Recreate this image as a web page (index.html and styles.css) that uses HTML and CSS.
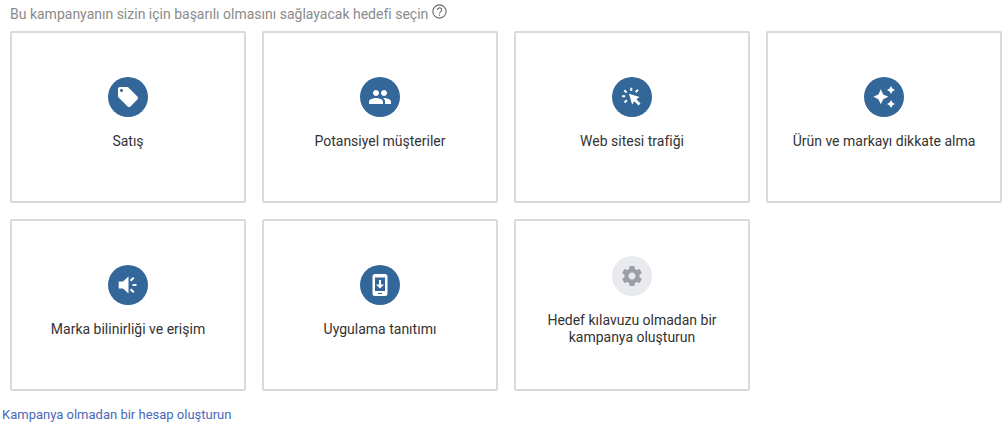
FILE: index.html
```html
<!DOCTYPE html>
<html lang="tr">
<head>
<meta charset="utf-8">
<meta name="viewport" content="width=device-width, initial-scale=1">
<title>Kampanya hedefi</title>
<link rel="stylesheet" href="styles.css">
</head>
<body>
<main class="page">
  <header class="heading">
    <h1 class="title">Bu kampanyanın sizin için başarılı olmasını sağlayacak hedefi seçin</h1>
    <button class="help" type="button" aria-label="Yardım">
      <svg viewBox="0 0 14 14" fill="none" stroke="currentColor">
        <circle cx="7" cy="7" r="6.2"/>
        <path d="M5 5.600a2 2 0 1 1 3.200 1.600C7.400 7.800 7 8 7 8.900M7 9.800v1.100"/>
      </svg>
    </button>
  </header>

  <div class="goals">
    <button class="goal" type="button">
      <span class="badge"><svg viewBox="0 0 24 24"><path d="M21.410 11.580l-9-9C12.050 2.220 11.550 2 11 2H4c-1.100 0-2 .9-2 2v7c0 .55.220 1.050.590 1.420l9 9c.36.36.86.58 1.410.58s1.050-.22 1.410-.59l7-7c.37-.36.59-.86.59-1.410s-.23-1.060-.59-1.420zM5.500 7C4.670 7 4 6.330 4 5.500S4.670 4 5.500 4 7 4.670 7 5.500 6.330 7 5.500 7z"/></svg></span>
      <span class="label">Satış</span>
    </button>
    <button class="goal" type="button">
      <span class="badge"><svg viewBox="0 0 24 24"><path d="M16 11c1.660 0 2.990-1.340 2.990-3S17.660 5 16 5s-3 1.340-3 3 1.340 3 3 3zm-8 0c1.660 0 2.990-1.340 2.990-3S9.660 5 8 5 5 6.340 5 8s1.340 3 3 3zm0 2c-2.330 0-7 1.170-7 3.500V19h14v-2.500C15 14.170 10.330 13 8 13zm8 0c-.29 0-.62.02-.97.05 1.160.84 1.970 1.970 1.970 3.450V19h6v-2.500c0-2.330-4.670-3.500-7-3.500z"/></svg></span>
      <span class="label">Potansiyel müşteriler</span>
    </button>
    <button class="goal" type="button">
      <span class="badge"><svg viewBox="0 0 24 24"><path d="M9 8.700l10.500 3.300-3.200 2.200 4.200 4.200-2 2-4.200-4.200-2.200 3.300z"/><path class="ray" d="M11.300 2.700v3.300M4.300 5.200l2.300 2.300M2 11.200h3.200M4.500 17.500l2.400-2.400M18 4.700l-2.400 2.400"/></svg></span>
      <span class="label">Web sitesi trafiği</span>
    </button>
    <button class="goal" type="button">
      <span class="badge"><svg viewBox="0 0 24 24"><path d="M8.800 4.300L11.200 9.400 16.300 11.800l-5.100 2.400-2.400 5.100-2.400-5.100L1.300 11.800l5.100-2.400zM19 1l1.400 2.600L23 5l-2.600 1.400L19 9l-1.400-2.600L15 5l2.600-1.400zM19 15l1.400 2.600L23 19l-2.600 1.400L19 23l-1.400-2.600L15 19l2.600-1.400z"/></svg></span>
      <span class="label">Ürün ve markayı dikkate alma</span>
    </button>
    <button class="goal" type="button">
      <span class="badge"><svg viewBox="0 0 24 24"><path d="M2.700 8.500v7H7l5.500 5V3.500L7 8.500z"/><path class="ray" d="M16.500 12h4M14.600 7.800l3.200-3.200M14.600 16.200l3.200 3.200"/></svg></span>
      <span class="label">Marka bilinirliği ve erişim</span>
    </button>
    <button class="goal" type="button">
      <span class="badge"><svg viewBox="0 0 24 24"><path fill-rule="evenodd" d="M7 1h10a2.500 2.500 0 0 1 2.500 2.500v17a2.500 2.500 0 0 1-2.500 2.500H7a2.500 2.500 0 0 1-2.500-2.500v-17A2.500 2.500 0 0 1 7 1zM7 4.500v13.500h10V4.500zM10 20v1h4v-1zM11 7h2v4.500h3l-4 4-4-4h3z"/></svg></span>
      <span class="label">Uygulama tanıtımı</span>
    </button>
    <button class="goal" type="button">
      <span class="badge badge-muted"><svg viewBox="0 0 24 24"><path d="M19.430 12.980c.04-.32.070-.64.070-.98s-.03-.66-.07-.98l2.110-1.650c.19-.15.24-.42.120-.64l-2-3.460c-.12-.22-.39-.3-.61-.22l-2.490 1c-.52-.4-1.080-.73-1.690-.98l-.38-2.650C14.460 2.180 14.250 2 14 2h-4c-.25 0-.46.18-.49.42l-.38 2.650c-.61.25-1.170.59-1.690.98l-2.490-1c-.23-.09-.49 0-.61.22l-2 3.460c-.13.22-.07.49.120.64l2.110 1.650c-.04.32-.07.65-.07.98s.03.66.070.98l-2.110 1.650c-.19.15-.24.42-.12.64l2 3.460c.12.22.39.3.610.22l2.490-1c.52.4 1.080.73 1.690.98l.38 2.650c.03.24.24.42.490.42h4c.25 0 .46-.18.490-.42l.38-2.650c.61-.25 1.170-.59 1.690-.98l2.490 1c.23.090.49 0 .61-.22l2-3.460c.12-.22.070-.49-.12-.64l-2.110-1.650zM12 15.500c-1.930 0-3.500-1.570-3.500-3.500s1.570-3.500 3.500-3.500 3.500 1.570 3.500 3.500-1.570 3.500-3.500 3.500z"/></svg></span>
      <span class="label">Hedef kılavuzu olmadan bir kampanya oluşturun</span>
    </button>
  </div>

  <a class="link" href="#">Kampanya olmadan bir hesap oluşturun</a>
</main>
</body>
</html>
```
FILE: styles.css
```css
* {
  box-sizing: border-box;
}

body {
  margin: 0;
  background: #fff;
  color: #3c4043;
  font-family: Roboto, "Noto Sans", sans-serif;
  font-size: 14px;
  line-height: 17px;
}

.page {
  padding-top: 4px;
}

.heading {
  display: flex;
  align-items: flex-start;
  gap: 4px;
  padding: 0 10px;
  margin-bottom: 6px;
}

.title {
  margin: 0;
  color: #8a8a8a;
  font-size: 14px;
  font-weight: 400;
  line-height: 21px;
}

.help {
  padding: 0;
  border: 0;
  background: none;
  color: #666;
  line-height: 0;
}

.help svg {
  width: 15px;
  height: 15px;
}

.goals {
  display: grid;
  grid-template-columns: repeat(4, 1fr);
  grid-auto-rows: minmax(172px, auto);
  gap: 16px;
  padding: 0 5px 0 10px;
}

.goal {
  display: flex;
  flex-direction: column;
  align-items: center;
  justify-content: center;
  gap: 16px;
  padding: 16px 24px 24px;
  border: 2px solid #dadada;
  border-radius: 2px;
  background: #fff;
  color: #333;
  font: inherit;
  cursor: pointer;
}

.badge {
  display: flex;
  align-items: center;
  justify-content: center;
  width: 40px;
  height: 40px;
  border-radius: 50%;
  background: #336699;
  color: #fff;
}

.badge svg {
  width: 24px;
  height: 24px;
  fill: currentColor;
}

.badge-muted {
  background: #e8eaed;
  color: #9aa0a6;
}

.badge .ray {
  fill: none;
  stroke: currentColor;
  stroke-width: 2;
}

.link {
  display: inline-block;
  margin: 15px 2px 0;
  color: #4a68b8;
  font-size: 13px;
  text-decoration: none;
}
```
